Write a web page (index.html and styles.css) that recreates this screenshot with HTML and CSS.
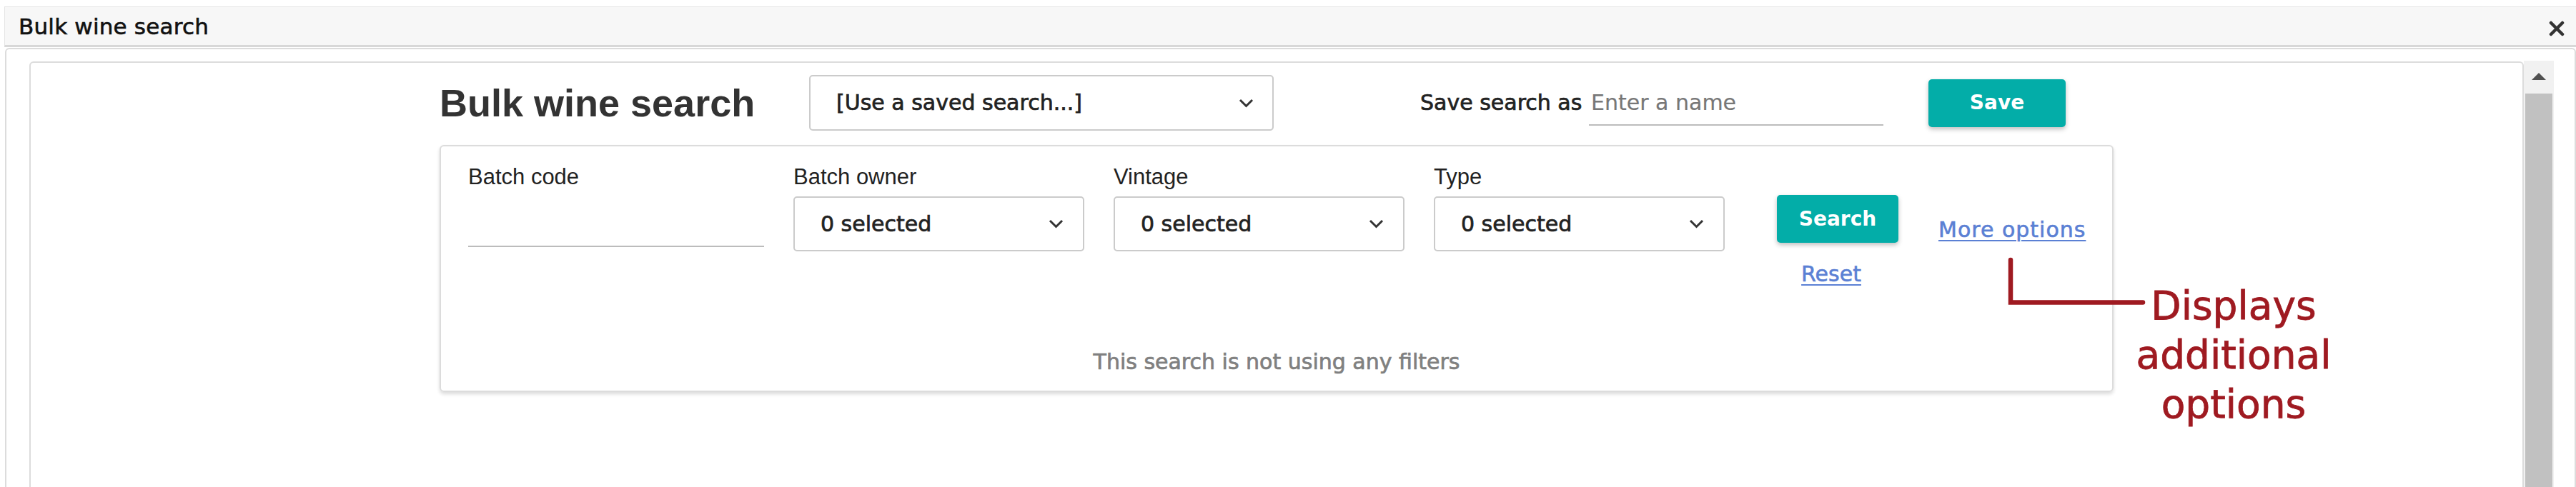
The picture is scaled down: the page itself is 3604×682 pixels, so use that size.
FILE: index.html
```html
<!DOCTYPE html>
<html lang="en">
<head>
<meta charset="utf-8">
<title>Bulk wine search</title>
<link rel="stylesheet" href="styles.css">
</head>
<body>
<div class="titlebar">
  <span class="title">Bulk wine search</span>
  <svg class="close" width="22" height="22" viewBox="0 0 22 22"><path d="M3 3L19 19M19 3L3 19" stroke="#333" stroke-width="4.5" stroke-linecap="round"/></svg>
</div>
<div class="frame">
  <div class="viewport">
    <div class="panel">
      <div class="content">
        <div class="toprow">
          <h1 class="heading">Bulk wine search</h1>
          <div class="select select-saved">
            <span>[Use a saved search...]</span>
            <svg class="chev" width="21" height="13" viewBox="0 0 21 13"><polyline points="2,2 10.5,10.5 19,2" fill="none" stroke="#333" stroke-width="3"/></svg>
          </div>
          <div class="save-label">Save search as</div>
          <div class="name-input"><span class="placeholder">Enter a name</span></div>
          <button class="btn btn-save">Save</button>
        </div>
        <div class="filters">
          <div class="fields">
            <div class="field field-code">
              <div class="label">Batch code</div>
              <div class="text-input"></div>
            </div>
            <div class="field">
              <div class="label">Batch owner</div>
              <div class="select select-multi"><span>0 selected</span><svg class="chev" width="21" height="13" viewBox="0 0 21 13"><polyline points="2,2 10.5,10.5 19,2" fill="none" stroke="#333" stroke-width="3"/></svg></div>
            </div>
            <div class="field">
              <div class="label">Vintage</div>
              <div class="select select-multi"><span>0 selected</span><svg class="chev" width="21" height="13" viewBox="0 0 21 13"><polyline points="2,2 10.5,10.5 19,2" fill="none" stroke="#333" stroke-width="3"/></svg></div>
            </div>
            <div class="field">
              <div class="label">Type</div>
              <div class="select select-multi"><span>0 selected</span><svg class="chev" width="21" height="13" viewBox="0 0 21 13"><polyline points="2,2 10.5,10.5 19,2" fill="none" stroke="#333" stroke-width="3"/></svg></div>
            </div>
            <div class="actions">
              <button class="btn btn-search">Search</button>
              <a class="link reset" href="#">Reset</a>
            </div>
            <a class="link more" href="#">More options</a>
          </div>
          <div class="status">This search is not using any filters</div>
        </div>
      </div>
    </div>
    <div class="scrollbar">
      <div class="sb-arrow"></div>
      <div class="sb-thumb"></div>
    </div>
  </div>
</div>
<div class="callout">
  <svg class="callout-line" width="200" height="75" viewBox="0 0 200 75"><path d="M7 6V65.5H192" fill="none" stroke="#9f1a21" stroke-width="6.5" stroke-linecap="round"/></svg>
  <div class="callout-text">Displays<br>additional<br>options</div>
</div>
</body>
</html>
```
FILE: styles.css
```css
html, body {
  margin: 0;
  padding: 0;
  background: #fff;
  width: 3604px;
  height: 682px;
  overflow: hidden;
  font-family: "DejaVu Sans", "Open Sans", sans-serif;
}

.titlebar {
  margin: 9px 0 0 6px;
  height: 53px;
  background: #f7f7f7;
  border-top: 1px solid #e4e4e4;
  border-left: 1px solid #e4e4e4;
  border-bottom: 3px solid #d8d8d8;
  display: flex;
  align-items: center;
  padding-left: 19px;
}

.title {
  font-size: 31px;
  line-height: 36px;
  color: #111;
  flex: 1;
  letter-spacing: 0.2px;
  -webkit-text-stroke: 0.6px #111;
}

.close {
  margin-right: 16px;
  margin-top: 7px;
}

.frame {
  margin: 1px 0 0 7px;
  height: 620px;
  border: 2px solid #dcdcdc;
  border-bottom: none;
  border-radius: 6px 6px 0 0;
}

.viewport {
  display: flex;
  align-items: flex-start;
}

.panel {
  margin: 17px 0 0 32px;
  width: 3490px;
  height: 600px;
  box-sizing: border-box;
  border: 2px solid #dcdcdc;
  border-bottom: none;
  border-radius: 6px 6px 0 0;
}

.content {
  width: 2342px;
  margin: 0 auto;
}

.toprow {
  margin-top: 17px;
  height: 78px;
  display: flex;
  align-items: center;
}

.heading {
  margin: 0;
  flex: 0 0 517px;
  font-family: "Liberation Sans", Arial, sans-serif;
  font-weight: bold;
  font-size: 54px;
  line-height: 61px;
  color: #333;
}

.select {
  box-sizing: border-box;
  border: 2px solid #cbcbcb;
  border-radius: 5px;
  display: flex;
  align-items: center;
  justify-content: space-between;
  font-size: 30px;
  line-height: 36px;
  color: #222;
  background: #fff;
  -webkit-text-stroke: 0.7px #222;
}

.select-saved {
  width: 650px;
  height: 78px;
  padding: 0 26px 0 36px;
}

.select-multi {
  width: 407px;
  height: 77px;
  padding: 0 27px 0 36px;
}

.chev {
  display: block;
}

.save-label {
  margin-left: 205px;
  width: 236px;
  font-size: 30px;
  line-height: 36px;
  color: #222;
  -webkit-text-stroke: 0.7px #222;
}

.name-input {
  align-self: flex-end;
  margin-bottom: 7px;
  width: 409px;
  height: 60px;
  border-bottom: 2px solid #bcbcbc;
  display: flex;
  align-items: center;
  padding-left: 3px;
  box-sizing: content-box;
}

.placeholder {
  font-size: 30px;
  line-height: 36px;
  color: #777;
  -webkit-text-stroke: 0.2px #777;
}

.btn {
  border: none;
  background: #03ada8;
  color: #fff;
  font-family: "DejaVu Sans", "Open Sans", sans-serif;
  font-weight: bold;
  font-size: 28px;
  line-height: 36px;
  border-radius: 5px;
  box-shadow: 0 3px 6px rgba(0, 0, 0, 0.25);
  padding: 0;
  cursor: pointer;
}

.btn-save {
  margin-left: 63px;
  width: 192px;
  height: 67px;
}

.filters {
  margin-top: 20px;
  border: 2px solid #dcdcdc;
  border-radius: 6px;
  box-shadow: 0 3px 5px rgba(0, 0, 0, 0.14);
  padding: 25px 38px 22.5px;
}

.fields {
  display: flex;
  align-items: flex-start;
  height: 171.5px;
}

.field {
  flex: 0 0 407px;
  margin-left: 41px;
}

.field-code {
  flex-basis: 414px;
  margin-left: 0;
}

.label {
  font-family: "Liberation Sans", Arial, sans-serif;
  font-size: 31px;
  line-height: 36px;
  color: #222;
  margin-bottom: 9px;
}

.text-input {
  height: 69px;
  border-bottom: 2px solid #bcbcbc;
}

.actions {
  flex: 0 0 170px;
  margin-left: 73px;
  margin-top: 43px;
}

.btn-search {
  display: block;
  width: 170px;
  height: 67px;
}

.link {
  font-size: 30px;
  line-height: 36px;
  color: #5b80d4;
  text-decoration: underline;
  text-decoration-thickness: 2px;
  text-underline-offset: 4px;
  -webkit-text-stroke: 0.6px #5b80d4;
  white-space: nowrap;
}

.reset {
  display: block;
  text-align: center;
  margin-top: 25.5px;
  padding-right: 18px;
}

.more {
  flex: 0 0 auto;
  margin-left: 56px;
  margin-top: 73.5px;
  letter-spacing: 1px;
}

.status {
  margin-top: 87px;
  text-align: center;
  font-size: 30px;
  line-height: 36px;
  color: #808080;
  -webkit-text-stroke: 0.7px #808080;
}

.scrollbar {
  margin-top: 16px;
  width: 42px;
  height: 600px;
  background: #f1f1f1;
}

.sb-arrow {
  width: 0;
  height: 0;
  margin: 17px auto 0;
  border-left: 10px solid transparent;
  border-right: 10px solid transparent;
  border-bottom: 10px solid #505050;
}

.sb-thumb {
  margin: 19px 0 0 2px;
  width: 38px;
  height: 560px;
  background: #c1c1c1;
}

.callout-line {
  position: absolute;
  left: 2806px;
  top: 358px;
}

.callout-text {
  position: absolute;
  left: 2955px;
  top: 393.5px;
  width: 340px;
  text-align: center;
  font-size: 55px;
  line-height: 69px;
  color: #9f1a21;
  -webkit-text-stroke: 0.8px #9f1a21;
}
```
